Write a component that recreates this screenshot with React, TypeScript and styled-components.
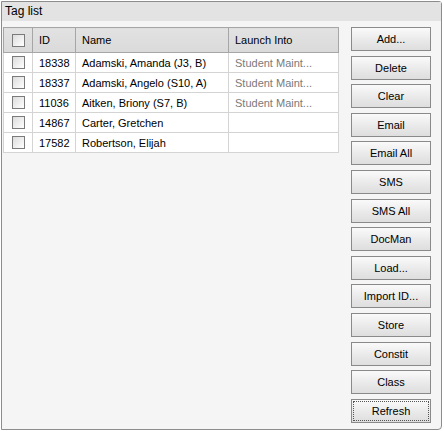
import React from "react";
import styled, { createGlobalStyle } from "styled-components";

const Global = createGlobalStyle`
  html, body { margin: 0; padding: 0; background: #ffffff; }
  body { font-family: "Liberation Sans", Arial, sans-serif; font-size: 11px; color: #000; }
`;

const Panel = styled.div`
  box-sizing: border-box;
  margin: 1px 0 0 1px;
  width: 441px;
  height: 429px;
  border: 1px solid #8c8c8c;
  border-radius: 0 3px 4px 0;
  background: #f5f5f5;
  display: flex;
  flex-direction: column;
`;

const TitleBar = styled.div`
  height: 19px;
  background: #e3e3e3;
  padding-left: 3px;
  font-size: 12px;
  line-height: 19px;
  color: #000;
`;

const Body = styled.div`
  flex: 1;
  display: flex;
  padding: 6px 0 0 1px;
  gap: 12px;
`;

const Table = styled.table`
  border-collapse: collapse;
  width: 335px;
  height: 126px;
  table-layout: fixed;
  background: #fff;
  border: 1px solid #a6a6a6;
  align-self: flex-start;
`;

const Th = styled.th<{ $w: number }>`
  width: ${(p) => p.$w}px;
  height: 25px;
  padding: 0 0 0 6px;
  text-align: left;
  font-weight: normal;
  font-size: 11px;
  background: linear-gradient(#e2e2e2, #dadada);
  border: 1px solid #a6a6a6;
  box-sizing: border-box;
`;

const Td = styled.td<{ $muted?: boolean }>`
  height: 20px;
  padding: 0 0 0 6px;
  font-size: 11px;
  color: ${(p) => (p.$muted ? "#7a7a7a" : "#000")};
  border: 1px solid #d4d4d4;
  border-left-color: #bdbdbd;
  white-space: nowrap;
  overflow: hidden;
  box-sizing: border-box;
`;

const CheckCell = styled.td`
  height: 20px;
  padding: 0;
  text-align: center;
  border: 1px solid #d4d4d4;
  box-sizing: border-box;
`;

const CheckHead = styled.th`
  width: 29px;
  padding: 0;
  text-align: center;
  background: linear-gradient(#e2e2e2, #dadada);
  border: 1px solid #a6a6a6;
  box-sizing: border-box;
`;

const Box = styled.span`
  display: inline-block;
  vertical-align: middle;
  width: 11px;
  height: 11px;
  border: 1px solid #7a7a7a;
  background: linear-gradient(135deg, #dcdcdc, #ffffff);
`;

const Buttons = styled.div`
  display: flex;
  flex-direction: column;
  gap: 4.6px;
`;

const Button = styled.button<{ $focus?: boolean }>`
  box-sizing: border-box;
  width: 80px;
  height: 24px;
  border: 1px solid #8a8a8a;
  background: linear-gradient(#fafafa, #e8e8e8 60%, #dedede);
  font-family: "Liberation Sans", Arial, sans-serif;
  font-size: 11px;
  color: #000;
  padding: 0;
  position: relative;
  cursor: default;
  ${(p) =>
    p.$focus
      ? `&::after { content: ""; position: absolute; inset: 1px; border: 1px dotted #555; }`
      : ""}
`;

const rows = [
  { id: "18338", name: "Adamski, Amanda (J3, B)", launch: "Student Maint..." },
  { id: "18337", name: "Adamski, Angelo (S10, A)", launch: "Student Maint..." },
  { id: "11036", name: "Aitken, Briony (S7, B)", launch: "Student Maint..." },
  { id: "14867", name: "Carter, Gretchen", launch: "" },
  { id: "17582", name: "Robertson, Elijah", launch: "" },
];

const buttons = [
  "Add...",
  "Delete",
  "Clear",
  "Email",
  "Email All",
  "SMS",
  "SMS All",
  "DocMan",
  "Load...",
  "Import ID...",
  "Store",
  "Constit",
  "Class",
  "Refresh",
];

export default function App() {
  return (
    <>
      <Global />
      <Panel>
        <TitleBar>Tag list</TitleBar>
        <Body>
          <Table>
            <thead>
              <tr>
                <CheckHead>
                  <Box />
                </CheckHead>
                <Th $w={43}>ID</Th>
                <Th $w={153}>Name</Th>
                <Th $w={110}>Launch Into</Th>
              </tr>
            </thead>
            <tbody>
              {rows.map((r) => (
                <tr key={r.id}>
                  <CheckCell>
                    <Box />
                  </CheckCell>
                  <Td>{r.id}</Td>
                  <Td>{r.name}</Td>
                  <Td $muted>{r.launch}</Td>
                </tr>
              ))}
            </tbody>
          </Table>
          <Buttons>
            {buttons.map((b) => (
              <Button key={b} $focus={b === "Refresh"}>
                {b}
              </Button>
            ))}
          </Buttons>
        </Body>
      </Panel>
    </>
  );
}
